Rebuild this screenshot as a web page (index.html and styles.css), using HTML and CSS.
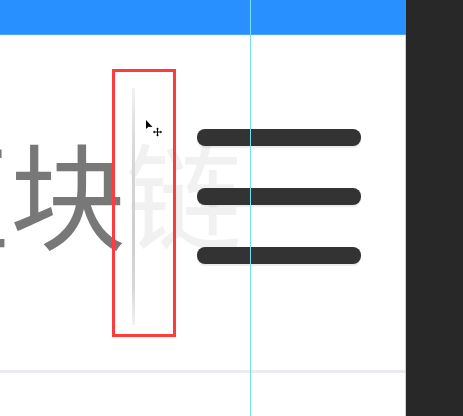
FILE: index.html
```html
<!DOCTYPE html>
<html lang="zh">
<head>
<meta charset="utf-8">
<title>区块链</title>
<link rel="stylesheet" href="styles.css">
</head>
<body>
<div class="workspace">
  <div class="artboard">
    <header class="topbar"></header>
    <main class="content">
      <div class="nav-row">
        <h1 class="title"><span class="ch-dim">区</span><span class="ch-dim">块</span><span class="ch-faint">链</span></h1>
        <button class="menu" aria-label="菜单">
          <span class="bar"></span>
          <span class="bar"></span>
          <span class="bar"></span>
        </button>
      </div>
    </main>
    <div class="divider"></div>
    <div class="footer"></div>

    <div class="caret"></div>
    <div class="selection"></div>
    <svg class="pointer" width="18" height="18" viewBox="0 0 18 18" aria-hidden="true">
      <path d="M1 1 L1 10 L3.5 7.8 L7.5 8 Z" fill="#000"/>
      <g stroke="#000" stroke-width="1" fill="none">
        <path d="M12.5 9 V17 M8.5 13 H16.5"/>
      </g>
      <path d="M12.5 8.5 L11 10.2 H14 Z M12.5 17.5 L11 15.8 H14 Z M8 13 L9.7 11.5 V14.5 Z M17 13 L15.3 11.5 V14.5 Z" fill="#000"/>
    </svg>
    <div class="guide"></div>
  </div>
  <aside class="panel"></aside>
</div>
</body>
</html>
```
FILE: styles.css
```css
* { box-sizing: border-box; margin: 0; padding: 0; }
html, body { width: 463px; height: 416px; overflow: hidden; background: #ffffff; }
body { font-family: "Noto Sans CJK SC", "Noto Sans", sans-serif; }

.workspace { display: flex; width: 463px; height: 416px; }

.artboard {
  position: relative;
  width: 406px;
  height: 416px;
  display: flex;
  flex-direction: column;
  overflow: hidden;
  background: #ffffff;
}

.topbar {
  height: 35px;
  flex: none;
  background: #2891ff;
  border-bottom: 1px solid #4aa3ff;
}

.content {
  height: 335px;
  flex: none;
  border-right: 1px solid #d2d2d2;
  overflow: hidden;
}

.nav-row {
  display: flex;
  align-items: flex-start;
  padding-top: 94px;
}

.title {
  flex: none;
  margin-left: -106px;
  margin-top: 3px;
  font-size: 116px;
  line-height: 1;
  font-weight: 400;
  white-space: nowrap;
  letter-spacing: 0;
}
.ch-dim { color: #787878; }
.ch-faint { color: #f1f1f1; }

.menu {
  flex: none;
  margin-left: -45px;
  width: 164px;
  display: flex;
  flex-direction: column;
  gap: 42px;
  background: none;
  border: 0;
}
.bar {
  display: block;
  height: 17px;
  border-radius: 8px;
  background: #333333;
  box-shadow: 0 2px 1px rgba(0,0,0,0.08);
}

.divider {
  height: 3px;
  flex: none;
  background: #ececf0;
  border-right: 1px solid #d2d2d2;
}
.footer {
  flex: 1;
  border-right: 1px solid #d2d2d2;
}

.caret {
  position: absolute;
  left: 132px;
  top: 88px;
  width: 3px;
  height: 237px;
  background: linear-gradient(to bottom, #f2f2f2 0%, #dcdcdc 20%, #cdcdcd 60%, #d8d8d8 85%, #f2f2f2 100%);
}

.selection {
  position: absolute;
  left: 112px;
  top: 69px;
  width: 64px;
  height: 268px;
  border: 3px solid #ff3b3b;
}

.pointer {
  position: absolute;
  left: 145px;
  top: 119px;
}

.guide {
  position: absolute;
  left: 250px;
  top: 0;
  width: 1px;
  height: 416px;
  background: #72e2f2;
}

.panel {
  flex: 1;
  background: #282828;
}
```
